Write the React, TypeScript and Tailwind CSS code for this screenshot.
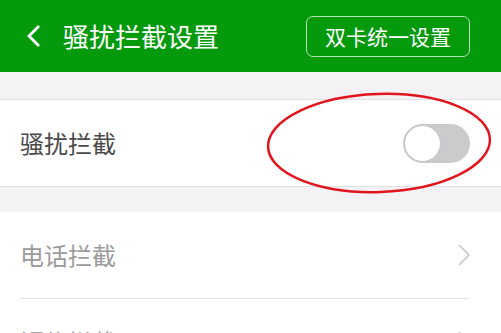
import React from "react";

const font = { fontFamily: '"Noto Sans CJK SC", "Noto Sans", sans-serif' };

const Chevron = () => (
  <svg width="14" height="24" viewBox="0 0 14 24" className="mr-[30px]">
    <path d="M2 2 L12 12 L2 22" fill="none" stroke="#c4c4c4" strokeWidth="1.6" />
  </svg>
);

export default function App() {
  return (
    <div className="relative w-[501px] h-[333px] overflow-hidden bg-[#f4f2f5]" style={font}>
      {/* header */}
      <div className="h-[72px] bg-[#049a0c] flex items-center">
        <svg width="16" height="24" viewBox="0 0 16 24" className="ml-[26px]">
          <path d="M13 2 L3 12 L13 22" fill="none" stroke="#fff" strokeWidth="2.8" />
        </svg>
        <span className="ml-[21px] text-[26px] text-white leading-none">骚扰拦截设置</span>
        <div className="ml-auto mr-[31px] w-[164px] h-[41px] rounded-[7px] border border-white/70 flex items-center justify-center text-white text-[21px] leading-none">
          双卡统一设置
        </div>
      </div>

      <div className="h-[27px]" />

      {/* 骚扰拦截 row */}
      <div className="h-[88px] bg-white border-y border-[#e2e0e3] flex items-center justify-between">
        <span className="ml-5 text-[24px] text-[#4a4a4a] leading-none">骚扰拦截</span>
        <div className="mr-[31px] w-[67px] h-[39px] rounded-full bg-[#cbcacd] flex items-center">
          <div className="w-[37px] h-[37px] rounded-full bg-white border border-[#c2c2c2] ml-px" />
        </div>
      </div>

      <div className="h-[25px]" />

      {/* list */}
      <div className="bg-white">
        <div className="h-[86px] flex items-center justify-between">
          <span className="ml-5 text-[24px] text-[#9b9b9b] leading-none">电话拦截</span>
          <Chevron />
        </div>
        <div className="mx-5 mr-[32px] h-px bg-[#e3e3e3]" />
        <div className="h-[86px] flex items-center justify-between">
          <span className="ml-5 text-[24px] text-[#9b9b9b] leading-none">短信拦截</span>
          <Chevron />
        </div>
      </div>

      {/* red annotation */}
      <svg className="absolute left-[264px] top-[90px]" width="230" height="108" viewBox="0 0 230 108">
        <ellipse cx="115" cy="53" rx="111" ry="49" fill="none" stroke="#e1151d" strokeWidth="2.5" transform="rotate(-2 115 53)" />
      </svg>
    </div>
  );
}
